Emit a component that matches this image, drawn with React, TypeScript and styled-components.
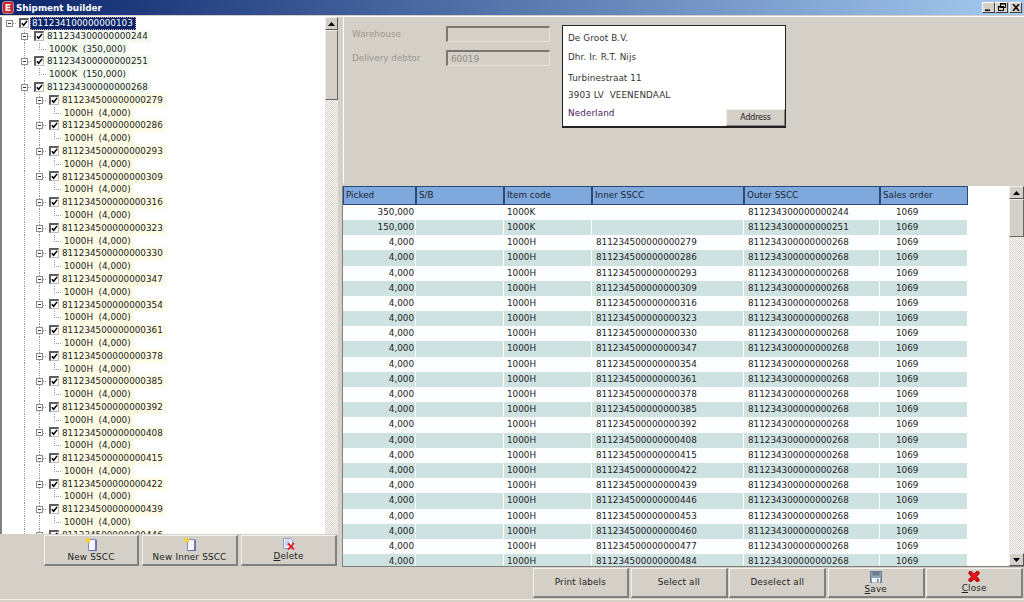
import React from "react";
import styled, { createGlobalStyle } from "styled-components";

const Global = createGlobalStyle`
  html, body { margin: 0; padding: 0; background: #d4d0c8; }
  * { box-sizing: border-box; }
`;

const Win = styled.div`
  width: 1024px; height: 602px; overflow: hidden; background: #d4d0c8;
  display: flex; flex-direction: column;
  font-family: "DejaVu Sans", Verdana, sans-serif; font-size: 8.8px; color: #222;
`;
const TitleBar = styled.div`
  height: 15px; flex: none; display: flex; align-items: center;
  padding: 0 2px 0 2px; gap: 2px;
  background: linear-gradient(90deg, #0a246a 0%, #a6caf0 100%);
  color: #fff; font: bold 8.8px "DejaVu Sans", sans-serif;
`;
const TitleText = styled.span` flex: 1; `;
const WinButtons = styled.div` display: flex; margin-top: -1px; `;
const WinBtn = styled.div<{ $gap?: number }>`
  width: 13px; height: 11px; margin-left: ${p => p.$gap ?? 0}px; background: #d4d0c8;
  border: 1px solid; border-color: #fff #404040 #404040 #fff;
  display: flex; align-items: center; justify-content: center;
`;
const Main = styled.div`
  flex: none; height: 582px; margin-top: 1px; border-top: 1px solid #fff;
  display: flex;
`;
const FootLine = styled.div` height: 1px; margin-top: 1px; flex: none; background: #efede8; `;
const LeftCol = styled.div` width: 342px; flex: none; display: flex; flex-direction: column; `;
const TreeFrame = styled.div`
  width: 338px; height: 517px; flex: none; display: flex; background: #fff;
  border-left: 2px solid #808080;
`;
const TreeBody = styled.div`
  flex: 1; overflow: hidden;
  display: flex; flex-direction: column;
`;
const Row = styled.div`
  flex: none; height: 12.8px; display: flex; align-items: stretch;
`;
const dotsV = "repeating-linear-gradient(180deg, #999 0 1px, transparent 1px 2px)";
const dotsH = "repeating-linear-gradient(90deg, #999 0 1px, transparent 1px 2px)";
const Cell = styled.div<{ $kind?: "blank" | "guide" | "elbow" | "exp" | "expTop" }>`
  width: 15px; flex: none; display: flex; align-items: center; justify-content: center;
  background-repeat: no-repeat;
  ${p => p.$kind === "guide" && `background-image: ${dotsV}; background-size: 1px 100%; background-position: 7px 0;`}
  ${p => p.$kind === "elbow" && `background-image: ${dotsV}, ${dotsH}; background-size: 1px 50%, 8px 1px; background-position: 7px 0, 7px 6px;`}
  ${p => p.$kind === "exp" && `background-image: ${dotsV}, ${dotsH}; background-size: 1px 100%, 8px 1px; background-position: 7px 0, 7px 6px;`}
  ${p => p.$kind === "expTop" && `background-image: ${dotsH}; background-size: 8px 1px; background-position: 7px 6px;`}
`;
const Expander = styled.div`
  width: 7px; height: 7px; background: #fff; border: 1px solid #8a8a8a; position: relative;
  &::after { content: ""; position: absolute; left: 1px; top: 2px; width: 3px; height: 1px; background: #333; }
`;
const CheckBox = styled.div`
  width: 10px; height: 10px; margin: -1px 2px 0 0; background: #fff; flex: none;
  border: 1px solid; border-width: 2px 1px 1px 2px; border-color: #5e5e5e #bbb #bbb #5e5e5e;
  display: flex; align-items: center; justify-content: center;
`;
const Label = styled.div<{ $tone: "sel" | "green" | "yellow"; $shift?: number }>`
  height: 12.8px; line-height: 12.8px; padding: 0 3px 0 2px; margin-left: ${p => p.$shift ?? -2}px; white-space: nowrap;
  background: ${p => p.$tone === "sel" ? "#0a246a" : p.$tone === "green" ? "#f3fbf0" : "#fdfbe4"};
  color: ${p => p.$tone === "sel" ? "#fff" : "#222"};
  ${p => p.$tone === "sel" && "outline: 1px dotted #caa; outline-offset: -1px;"}
`;
const LeafText = styled.span` white-space: pre; `;

const Track = styled.div<{ $w: number }>`
  width: ${p => p.$w}px; flex: none; display: flex; flex-direction: column; align-self: stretch;
  background: #e8e6e1 repeating-conic-gradient(#d4d0c8 0 25%, #fff 0 50%) 0 0 / 2px 2px;
`;
const ScrollBtn = styled.div<{ $h?: number }>`
  height: ${p => p.$h ?? 13}px; flex: none; background: #d4d0c8;
  border: 1px solid; border-color: #f0eee9 #555 #555 #f0eee9;
  display: flex; align-items: center; justify-content: center;
`;
const Thumb = styled.div<{ $h: number }>`
  height: ${p => p.$h}px; flex: none; background: #d4d0c8;
  border: 1px solid; border-color: #f0eee9 #666 #666 #f0eee9;
`;
const Spacer = styled.div` flex: 1; `;

const LeftButtons = styled.div`
  display: flex; gap: 3px; margin: 1px 0 0 44px; width: 293px; height: 31px;
`;
const Btn = styled.div<{ $w: number }>`
  width: ${p => p.$w}px; height: 100%; flex: none; background: #d4d0c8;
  border: 1px solid; border-width: 1px 2px 2px 1px; border-color: #f4f2ee #808080 #808080 #f4f2ee;
  display: flex; flex-direction: column; align-items: center; justify-content: center;
  color: #222; line-height: 11px; letter-spacing: 0.2px;
  svg { display: block; margin-bottom: 1px; }
`;
const RightCol = styled.div` flex: 1; display: flex; flex-direction: column; min-width: 0; `;
const TopPanel = styled.div`
  margin-left: 1px; height: 166px; flex: none; border-left: 1px solid #fff;
  display: flex; padding: 8px 0 0 8px; gap: 12px; align-items: flex-start;
`;
const Form = styled.div`
  width: 198px; flex: none; display: grid; grid-template-columns: 94px 104px; row-gap: 8px; padding-top: 1px;
`;
const FormLabel = styled.div` height: 16px; line-height: 16px; color: #9a968f; `;
const Input = styled.div`
  height: 16px; line-height: 14px; padding-left: 3px; color: #8f8b85; background: #d4d0c8;
  border: 1px solid; border-width: 2px 1px 1px 2px; border-color: #7a7873 #e4e2dc #e4e2dc #7a7873;
`;
const AddressBox = styled.div`
  width: 224px; height: 103px; background: #fff; border: 1px solid #222; border-width: 1px 1px 2px 1px; position: relative;
  display: grid; grid-template-rows: 19px 21px 17px 18px auto; padding: 7px 0 0 5px; align-items: start;
`;
const AddressLine = styled.div<{ $accent?: boolean }>`
  line-height: 11px; white-space: pre; letter-spacing: 0.1px;
  color: ${p => p.$accent ? "#4a1a60" : "#333"};
`;
const AddressBtn = styled.div`
  position: absolute; right: 0; bottom: 0; width: 59px; height: 17px; background: #d4d0c8;
  border: 1px solid; border-color: #f4f2ee #808080 #808080 #f4f2ee;
  display: flex; align-items: center; justify-content: center; font-size: 8px; letter-spacing: -0.2px;
`;
const GridFrame = styled.div`
  margin-top: 3px; height: 381px; flex: none; display: flex; background: #fff;
  border-left: 1px solid #808080; border-bottom: 1px solid #808080;
`;
const GridBody = styled.div`
  flex: 1; min-width: 0; overflow: hidden; display: flex; flex-direction: column;
`;
const cols = "73px 88px 88px 152px 136px 88px";
const HeadRow = styled.div`
  display: grid; grid-template-columns: ${cols}; height: 18.8px; flex: none; width: 625px;
`;
const HeadCell = styled.div`
  background: #7fa9dc; border: 1px solid #2b4a78; padding-left: 2px; line-height: 16px; color: #1c2430;
`;
const DataRow = styled.div<{ $alt: boolean }>`
  display: grid; grid-template-columns: ${cols}; height: 15.2px; flex: none; width: 625px;
  & > div { background: ${p => p.$alt ? "#cfe2e2" : "#fdfeff"}; }
`;
const DataCell = styled.div<{ $align?: "right" | "left"; $pad?: number }>`
  line-height: 15.2px; border-right: 1px solid #fff; white-space: nowrap;
  text-align: ${p => p.$align ?? "left"};
  padding: ${p => p.$align === "right" ? "0 1px 0 0" : `0 0 0 ${p.$pad ?? 3}px`};
`;
const BottomBar = styled.div`
  display: flex; justify-content: flex-end; gap: 1.75px; margin-top: 1px; height: 30px; padding-right: 1px;
`;

const Up = () => <svg width="7" height="4" viewBox="0 0 7 4"><path d="M3.5 0 7 4H0z" fill="#000" /></svg>;
const Down = () => <svg width="7" height="4" viewBox="0 0 7 4"><path d="M0 0h7L3.5 4z" fill="#000" /></svg>;
const Check = () => <svg width="7" height="7" viewBox="0 0 8 8"><path d="M1 3.8 3 6l4-5" fill="none" stroke="#000" strokeWidth="1.8" /></svg>;
const LogoE = () => (
  <svg width="12" height="13" viewBox="0 0 12 13"><rect x="0.5" y="0.5" width="11" height="12" rx="2.5" fill="#c8242c" stroke="#e8d0d0" strokeWidth="0.6" /><path d="M3.5 3h5v1.6H5.3v1.2h2.9v1.5H5.3v1.2h3.2V10h-5z" fill="#fff" /></svg>
);
const NewDoc = () => (
  <svg width="12" height="13" viewBox="0 0 12 13">
    <path d="M3.500 1.500h7.500v11H3.500z" fill="#f6f7ff" stroke="#8088cc" />
    <path d="M11 2v11H4" fill="none" stroke="#4a4aa0" strokeWidth="1.2" />
    <rect x="0.500" y="0" width="4.500" height="4.500" rx="1" fill="#f6cf2c" />
  </svg>
);
const DeleteDoc = () => (
  <svg width="14" height="12" viewBox="0 0 14 12">
    <path d="M1.5.5h7l2 2v8h-9z" fill="#eef2fb" stroke="#8a9ac8" />
    <path d="M3 3h5M3 5h5M3 7h3" stroke="#a0b0d8" />
    <path d="M6 11.5 12 5M6 5.5l6 6" stroke="#e4202a" strokeWidth="1.8" />
  </svg>
);
const Floppy = () => (
  <svg width="12" height="12" viewBox="0 0 12 12">
    <path d="M.5.5h11v11H.5z" fill="#8fa4bd" stroke="#66788f" />
    <path d="M2.500 0.500h7v4h-7z" fill="#6b7b90" />
    <path d="M2 7h8v4.500H2z" fill="#f2f5fa" />
    <path d="M7 8h1.500v3H7z" fill="#66788f" />
  </svg>
);
const RedX = () => (
  <svg width="12" height="11" viewBox="0 0 12 11">
    <path d="M2.500 2 9.500 9M9.500 2 2.500 9" stroke="#b80c14" strokeWidth="4.200" strokeLinecap="round" />
    <path d="M3 2.500 9 8.500M9 2.500 3 8.500" stroke="#f0141c" strokeWidth="2.400" />
  </svg>
);

const inner = ["279","286","293","309","316","323","330","347","354","361","378","385","392","408","415","422","439","446","453","460","477","484"];
const treeInner = inner.slice(0, 18);

const NodeBox = () => <Cell><CheckBox><Check /></CheckBox></Cell>;

const Outer = ({ code, amt }: { code: string; amt: string }) => (
  <>
    <Row><Cell /><Cell $kind="exp"><Expander /></Cell><NodeBox /><Label $tone="green">{code}</Label></Row>
    <Row><Cell /><Cell $kind="guide" /><Cell $kind="elbow" /><Label $tone="green" $shift={0}><LeafText>{`1000K  (${amt})`}</LeafText></Label></Row>
  </>
);

const TreeScroll = () => (
  <Track $w={13}>
    <ScrollBtn><Up /></ScrollBtn>
    <Thumb $h={70} />
    <Spacer />
  </Track>
);

const GridScroll = () => (
  <Track $w={15}>
    <ScrollBtn><Up /></ScrollBtn>
    <Thumb $h={38} />
    <Spacer />
    <ScrollBtn><Down /></ScrollBtn>
  </Track>
);

type R = [string, string, string, string, string];
const rows: R[] = [
  ["350,000", "1000K", "", "811234300000000244", "1069"],
  ["150,000", "1000K", "", "811234300000000251", "1069"],
  ...inner.map<R>(n => ["4,000", "1000H", `811234500000000${n}`, "811234300000000268", "1069"]),
];

export default function App() {
  return (
    <Win>
      <Global />
      <TitleBar>
        <LogoE />
        <TitleText>Shipment builder</TitleText>
        <WinButtons>
          <WinBtn><svg width="7" height="7" viewBox="0 0 7 7"><path d="M0 5.500h5v1.500H0z" fill="#000" /></svg></WinBtn>
          <WinBtn><svg width="8" height="8" viewBox="0 0 8 8"><path d="M2.500.5h5v4h-5zM.5 3.500h5v4h-5z" fill="#d4d0c8" stroke="#000" /><path d="M2 0h6v1.500H2zM0 3h6v1.500H0z" fill="#000" /></svg></WinBtn>
          <WinBtn $gap={1}><svg width="8" height="7" viewBox="0 0 8 7"><path d="M1 0 7 7M7 0 1 7" stroke="#000" strokeWidth="1.500" /></svg></WinBtn>
        </WinButtons>
      </TitleBar>
      <Main>
        <LeftCol>
          <TreeFrame>
            <TreeBody>
              <Row><Cell $kind="expTop"><Expander /></Cell><NodeBox /><Label $tone="sel" $shift={-2}>811234100000000103</Label></Row>
              <Outer code="811234300000000244" amt="350,000" />
              <Outer code="811234300000000251" amt="150,000" />
              <Row><Cell /><Cell $kind="exp"><Expander /></Cell><NodeBox /><Label $tone="green">811234300000000268</Label></Row>
              {treeInner.map(n => (
                <React.Fragment key={n}>
                  <Row><Cell /><Cell $kind="guide" /><Cell $kind="exp"><Expander /></Cell><NodeBox /><Label $tone="yellow">{`811234500000000${n}`}</Label></Row>
                  <Row><Cell /><Cell $kind="guide" /><Cell $kind="guide" /><Cell $kind="elbow" /><Label $tone="yellow" $shift={0}><LeafText>1000H  (4,000)</LeafText></Label></Row>
                </React.Fragment>
              ))}
            </TreeBody>
            <TreeScroll />
          </TreeFrame>
          <LeftButtons>
            <Btn $w={95}><NewDoc /><span>New SSCC</span></Btn>
            <Btn $w={96}><NewDoc /><span>New Inner SSCC</span></Btn>
            <Btn $w={96}><DeleteDoc /><span><u>D</u>elete</span></Btn>
          </LeftButtons>
        </LeftCol>
        <RightCol>
          <TopPanel>
            <Form>
              <FormLabel>Warehouse</FormLabel><Input />
              <FormLabel>Delivery debtor</FormLabel><Input>60019</Input>
            </Form>
            <AddressBox>
              <AddressLine>De Groot B.V.</AddressLine>
              <AddressLine>Dhr. Ir. R.T. Nijs</AddressLine>
              <AddressLine>Turbinestraat 11</AddressLine>
              <AddressLine>3903 LV  VEENENDAAL</AddressLine>
              <AddressLine $accent>Nederland</AddressLine>
              <AddressBtn>Address</AddressBtn>
            </AddressBox>
          </TopPanel>
          <GridFrame>
            <GridBody>
              <HeadRow>
                <HeadCell>Picked</HeadCell><HeadCell>S/B</HeadCell><HeadCell>Item code</HeadCell>
                <HeadCell>Inner SSCC</HeadCell><HeadCell>Outer SSCC</HeadCell><HeadCell>Sales order</HeadCell>
              </HeadRow>
              {rows.map((r, i) => (
                <DataRow key={i} $alt={i % 2 === 1}>
                  <DataCell $align="right">{r[0]}</DataCell>
                  <DataCell />
                  <DataCell>{r[1]}</DataCell>
                  <DataCell $pad={4}>{r[2]}</DataCell>
                  <DataCell $pad={4}>{r[3]}</DataCell>
                  <DataCell $pad={16}>{r[4]}</DataCell>
                </DataRow>
              ))}
            </GridBody>
            <GridScroll />
          </GridFrame>
          <BottomBar>
            <Btn $w={96.7}>Print labels</Btn>
            <Btn $w={96.7}>Select all</Btn>
            <Btn $w={96.7}>Deselect all</Btn>
            <Btn $w={96.7}><Floppy /><span><u>S</u>ave</span></Btn>
            <Btn $w={96.7}><RedX /><span><u>C</u>lose</span></Btn>
          </BottomBar>
        </RightCol>
      </Main>
      <FootLine />
    </Win>
  );
}
